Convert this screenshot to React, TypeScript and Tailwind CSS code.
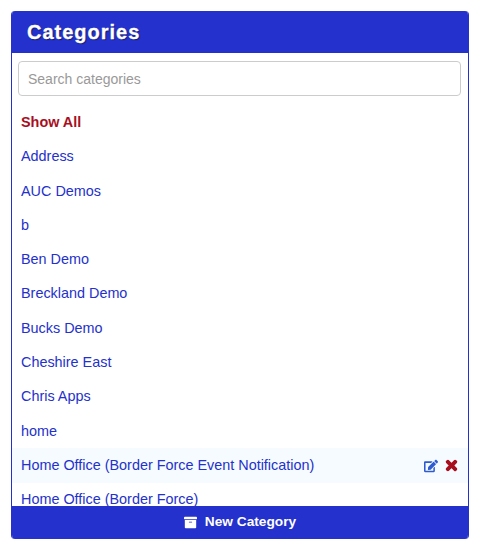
import React from 'react';
import { FaEdit, FaTimes, FaArchive } from 'react-icons/fa';

const categories = [
  'Address',
  'AUC Demos',
  'b',
  'Ben Demo',
  'Breckland Demo',
  'Bucks Demo',
  'Cheshire East',
  'Chris Apps',
  'home',
  'Home Office (Border Force Event Notification)',
  'Home Office (Border Force)',
];

const HOVERED = 'Home Office (Border Force Event Notification)';

export default function App() {
  return (
    <div className="w-[483px] h-[554px] bg-white pt-[11px] pl-[11px] font-['Liberation_Sans',Arial,sans-serif]">
      <div className="w-[458px] h-[528px] flex flex-col rounded-[4px] overflow-hidden bg-white border-x border-[#2431cc]">
        <div className="h-[42px] shrink-0 bg-[#2431cc] pl-[15px] flex items-center">
          <h3 className="text-[20px] font-bold text-white tracking-[1px] [-webkit-text-stroke:0.3px_white] [text-shadow:1px_1px_1px_rgba(0,0,0,0.5)]">
            Categories
          </h3>
        </div>
        <div className="flex-1 min-h-0 overflow-hidden">
          <div className="pt-2 pl-[6px] pr-[7px]">
            <input
              placeholder="Search categories"
              className="w-full h-[35px] px-[9px] text-[14px] text-[#555] placeholder:text-[#999] border border-[#ccc] rounded-[4px] outline-none"
            />
          </div>
          <ul className="mt-[9.66px]">
            <li className="h-[34.2857px] pl-[9px] flex items-center text-[14.4px] font-bold text-[#a80f1e]">Show All</li>
            {categories.map((name) => (
              <li
                key={name}
                className={`h-[34.2857px] pl-[9px] pr-[9.5px] flex items-center justify-between text-[14.4px] text-[#2431cc] ${name === HOVERED ? 'bg-[#f5fbff]' : ''}`}
              >
                <span>{name}</span>
                {name === HOVERED && (
                  <span className="flex items-center gap-[6px]">
                    <FaEdit size={14} className="text-[#2f5bd0]" />
                    <FaTimes size={15} stroke="currentColor" strokeWidth={40} className="text-[#a80f1e]" />
                  </span>
                )}
              </li>
            ))}
          </ul>
        </div>
        <button className="h-[33px] shrink-0 bg-[#2431cc] text-white text-[13.7px] font-bold flex items-center justify-center gap-[8px]">
          <FaArchive size={13} />
          New Category
        </button>
      </div>
    </div>
  );
}
